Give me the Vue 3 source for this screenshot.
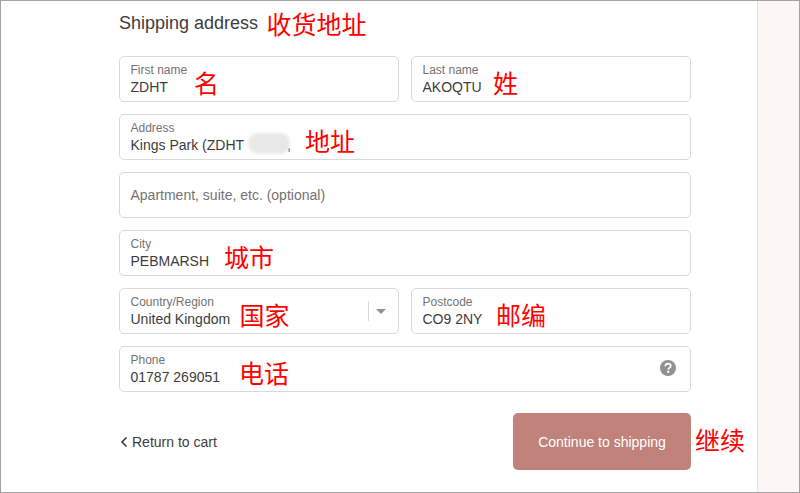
<script setup>
const rows = [
  [
    { label: 'First name', value: 'ZDHT', note: '名', noteX: 74 },
    { label: 'Last name', value: 'AKOQTU', note: '姓', noteX: 81 },
  ],
  [{ label: 'Address', value: 'Kings Park (ZDHT', tail: ',', blur: true, note: '地址', noteX: 185 }],
  [{ placeholder: 'Apartment, suite, etc. (optional)' }],
  [{ label: 'City', value: 'PEBMARSH', note: '城市', noteX: 104 }],
  [
    { label: 'Country/Region', value: 'United Kingdom', note: '国家', noteX: 119.5, select: true },
    { label: 'Postcode', value: 'CO9 2NY', note: '邮编', noteX: 84 },
  ],
  [{ label: 'Phone', value: '01787 269051', note: '电话', noteX: 119, help: true }],
]
</script>

<template>
  <div class="frame">
    <main class="main">
      <div class="heading-row">
        <h2 class="heading">Shipping address</h2>
        <span class="note heading-note">收货地址</span>
      </div>
      <form class="form">
        <div v-for="(row, r) in rows" :key="r" class="row">
          <div v-for="field in row" :key="field.label || field.placeholder" class="field">
            <template v-if="field.placeholder">
              <span class="placeholder">{{ field.placeholder }}</span>
            </template>
            <template v-else>
              <span class="label">{{ field.label }}</span>
              <span class="value">{{ field.value }}<span v-if="field.tail" class="tail">{{ field.tail }}</span></span>
            </template>
            <span v-if="field.blur" class="blur"></span>
            <span v-if="field.note" class="note field-note" :style="{ left: field.noteX + 'px' }">{{ field.note }}</span>
            <span v-if="field.select" class="select-end"><span class="caret"></span></span>
            <svg v-if="field.help" class="help" viewBox="0 0 16 16" width="16" height="16">
              <circle cx="8" cy="8" r="8" fill="#919191" />
              <path d="M5.3 6.2C5.4 4.6 6.5 3.7 8 3.7c1.6 0 2.7.9 2.7 2.2 0 1-.6 1.6-1.4 2.1-.7.4-1 .8-1 1.6" fill="none" stroke="#fff" stroke-width="1.8" />
              <rect x="7.2" y="10.7" width="2.1" height="2.1" fill="#fff" />
            </svg>
          </div>
        </div>
      </form>
      <div class="actions">
        <a class="back">
          <svg viewBox="0 0 8 12" width="8" height="12"><path d="M6.5 1.5 2 6l4.5 4.5" fill="none" stroke="#333" stroke-width="1.5" /></svg>
          <span>Return to cart</span>
        </a>
        <div class="submit">
          <button class="button" type="button">Continue to shipping</button>
          <span class="note submit-note">继续</span>
        </div>
      </div>
    </main>
    <aside class="aside"></aside>
  </div>
</template>

<style>
html, body { margin: 0; padding: 0; background: #fff; }
</style>

<style scoped>
.frame {
  box-sizing: border-box;
  width: 800px;
  height: 493px;
  border: 1px solid #a3a3a3;
  display: flex;
  overflow: hidden;
  background: #fff;
  font-family: "Liberation Sans", Arial, sans-serif;
  color: #333;
}
.main {
  width: 756px;
  box-sizing: border-box;
  padding: 0 66px 0 118px;
}
.aside {
  flex: 1;
  border-left: 1px solid #e1e1e1;
  background: #fcf7f4;
}
.heading-row {
  height: 55px;
  display: flex;
  align-items: flex-start;
  padding-top: 7px;
  box-sizing: border-box;
  position: relative;
}
.heading {
  margin: 5px 0 0;
  font-size: 18px;
  line-height: 21px;
  font-weight: 400;
  color: #3d3d3d;
}
.note {
  font-family: "Noto Sans CJK SC", sans-serif;
  color: #f00;
  font-size: 25px;
  line-height: 30px;
  white-space: nowrap;
}
.heading-note { margin-left: 8.5px; }
.form { display: flex; flex-direction: column; gap: 12px; }
.row { display: flex; gap: 12px; }
.field {
  flex: 1;
  position: relative;
  height: 46px;
  box-sizing: border-box;
  border: 1px solid #d9d9d9;
  border-radius: 5px;
  padding: 6px 11px 0 10.5px;
  display: flex;
  flex-direction: column;
}
.label { font-size: 12px; line-height: 14px; color: #737373; }
.value { font-size: 14px; line-height: 18px; margin-top: 1px; color: #3d3d3d; }
.tail { margin-left: 43px; }
.placeholder { font-size: 14px; line-height: 44px; margin-top: -6px; color: #737373; }
.blur {
  position: absolute;
  left: 128px;
  top: 18px;
  width: 42px;
  height: 21px;
  border-radius: 10px;
  background: #e8e8e8;
  filter: blur(1.5px);
}
.field-note { position: absolute; top: 10px; }
.select-end {
  position: absolute;
  right: 0;
  top: 12px;
  width: 30px;
  height: 20px;
  border-left: 1px solid #d9d9d9;
  display: flex;
  align-items: center;
  padding-left: 7px;
  box-sizing: border-box;
}
.caret {
  width: 0;
  height: 0;
  border-left: 5px solid transparent;
  border-right: 5px solid transparent;
  border-top: 5px solid #919191;
}
.help { position: absolute; right: 14px; top: 13px; }
.actions {
  margin-top: 21px;
  display: flex;
  justify-content: space-between;
  align-items: center;
}
.back {
  display: flex;
  align-items: center;
  gap: 4px;
  margin-left: 1px;
  font-size: 14px;
  color: #3d3d3d;
}
.submit { position: relative; }
.button {
  display: block;
  width: 178px;
  height: 57px;
  border: 0;
  border-radius: 5px;
  background: #c1827b;
  color: #fff;
  font: 14px "Liberation Sans", Arial, sans-serif;
}
.submit-note { position: absolute; left: 182px; top: 11px; }
</style>
